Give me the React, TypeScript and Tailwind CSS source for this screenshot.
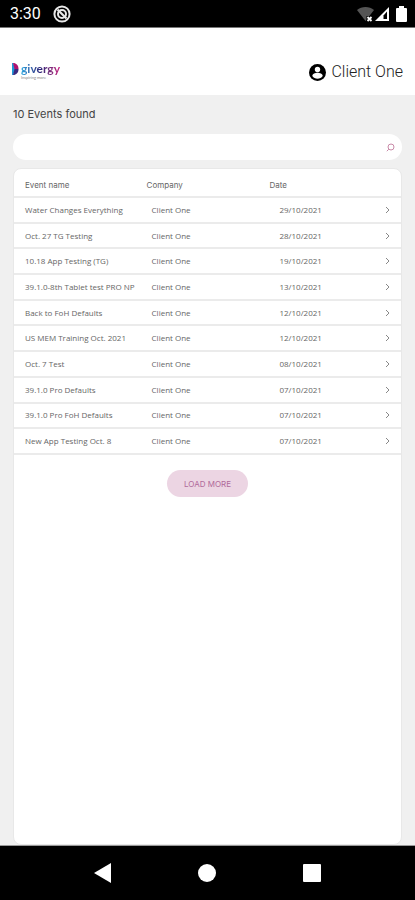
import React, { useState } from 'react';

interface EventRow {
  name: string;
  company: string;
  date: string;
}

const events: EventRow[] = [
  { name: 'Water Changes Everything', company: 'Client One', date: '29/10/2021' },
  { name: 'Oct. 27 TG Testing', company: 'Client One', date: '28/10/2021' },
  { name: '10.18 App Testing (TG)', company: 'Client One', date: '19/10/2021' },
  { name: '39.1.0-8th Tablet test PRO NP', company: 'Client One', date: '13/10/2021' },
  { name: 'Back to FoH Defaults', company: 'Client One', date: '12/10/2021' },
  { name: 'US MEM Training Oct. 2021', company: 'Client One', date: '12/10/2021' },
  { name: 'Oct. 7 Test', company: 'Client One', date: '08/10/2021' },
  { name: '39.1.0 Pro Defaults', company: 'Client One', date: '07/10/2021' },
  { name: '39.1.0 Pro FoH Defaults', company: 'Client One', date: '07/10/2021' },
  { name: 'New App Testing Oct. 8', company: 'Client One', date: '07/10/2021' },
];

const StatusBar: React.FC = () => (
  <div className="flex h-7 shrink-0 items-center justify-between border-b border-[#777777] bg-black pl-[10px] pr-2 text-white">
    <div className="flex items-center gap-3">
      <span className="font-['Roboto'] text-base leading-5">3:30</span>
      <svg width="18" height="18" viewBox="0 0 18 18" fill="none" stroke="#e8e8e8">
        <circle cx="9" cy="9" r="7.6" strokeWidth="2" />
        <circle cx="9" cy="9" r="4" strokeWidth="2" />
        <path d="M4.500 4.500l9 9" strokeWidth="2.200" />
      </svg>
    </div>
    <div className="flex items-center">
      <svg width="18" height="16" viewBox="0 0 18 16">
        <path d="M1 4C5.500 0 13.500 0 18 4L9.500 15z" fill="#555555" />
        <path d="M10.500 10h6v6h-6z" fill="#000000" />
        <path d="M11.500 11l4 4M15.500 11l-4 4" stroke="#ffffff" strokeWidth="1.800" />
      </svg>
      <svg width="15" height="16" viewBox="0 0 15 16" className="ml-px">
        <path d="M0 15L14 1v14z" fill="#ffffff" />
        <path d="M8.500 13V9.500L12 5.500v7.500z" fill="#000000" />
      </svg>
      <svg width="11" height="16" viewBox="0 0 11 16" className="ml-[6px]">
        <path d="M3 0h5v2h2q1 0 1 1v12q0 1-1 1H1q-1 0-1-1V3q0-1 1-1h2z" fill="#ffffff" />
      </svg>
    </div>
  </div>
);

const Logo: React.FC = () => (
  <a href="#" aria-label="givergy" className="flex items-start gap-[2px]">
    <svg width="7" height="12" viewBox="0 0 7 12">
      <path d="M0 0h1l3 6-3 6H0z" fill="#2196d6" />
      <path d="M1 0c3.500 0 5.500 2.500 5.500 6H2.500z" fill="#b0126f" />
      <path d="M1 12c3.500 0 5.500-2.500 5.500-6H2.500z" fill="#3a2a80" />
    </svg>
    <span className="flex flex-col">
      <span className="bg-gradient-to-r from-[#27a5e0] via-[#2c2377] to-[#c91b80] bg-clip-text font-['Lato'] text-xs font-bold leading-3 text-transparent">
        givergy
      </span>
      <span className="mt-px font-['Lato'] text-[4px] leading-1 text-[#888888]">Inspiring more</span>
    </span>
  </a>
);

const Header: React.FC = () => (
  <header className="flex h-[67px] shrink-0 items-end justify-between bg-white px-3 pb-[11px]">
    <div className="pb-1">
      <Logo />
    </div>
    <div className="flex items-center gap-[5px]">
      <svg width="17" height="17" viewBox="0 0 17 17">
        <circle cx="8.500" cy="8.500" r="8.500" fill="#000000" />
        <circle cx="8.500" cy="5.500" r="2.700" fill="#ffffff" />
        <path d="M3.300 12c0-2 3-3.200 5.200-3.200s5.200 1.200 5.200 3.200c-1.200 1.800-3 2.800-5.200 2.800S4.500 13.800 3.300 12z" fill="#ffffff" />
      </svg>
      <span className="font-['Roboto'] text-base font-light leading-6 text-[#222222]">Client One</span>
    </div>
  </header>
);

const SearchBox: React.FC = () => {
  const [query, setQuery] = useState('');

  return (
    <div className="mt-3 flex h-[26px] items-center rounded-full bg-white pl-3 pr-[7px]">
      <input
        type="text"
        aria-label="Search events"
        value={query}
        onChange={(e) => setQuery(e.target.value)}
        className="min-w-0 flex-1 bg-transparent text-xs outline-none"
      />
      <svg width="9" height="9" viewBox="0 0 9 9" fill="none" stroke="#c98aa8">
        <circle cx="5" cy="4" r="3" />
        <path d="M2.800 6.200L.8 8.200" />
      </svg>
    </div>
  );
};

const EventsTable: React.FC = () => (
  <table className="h-[286px] w-full table-fixed border-collapse text-left text-[8px] leading-2 text-[#666666]">
    <thead>
      <tr className="h-7 border-b-2 border-[#ebebeb]">
        <th className="w-[34%] pl-[11px] pt-1 font-normal">Event name</th>
        <th className="w-[32%] pl-px pt-1 font-normal">Company</th>
        <th className="pt-1 font-normal">Date</th>
        <th className="w-7" aria-label="Open" />
      </tr>
    </thead>
    <tbody className="font-['Open_Sans']">
      {events.map((event) => (
        <tr key={event.name} className="border-b-2 border-[#ebebeb]">
          <td className="whitespace-nowrap pl-[11px]">{event.name}</td>
          <td className="pl-[6px]">{event.company}</td>
          <td className="pl-[10px]">{event.date}</td>
          <td>
            <button type="button" aria-label={`Open ${event.name}`} className="block pl-3">
              <svg width="5" height="8" viewBox="0 0 5 8" fill="none" stroke="#888888">
                <path d="M1 1l3 3-3 3" />
              </svg>
            </button>
          </td>
        </tr>
      ))}
    </tbody>
  </table>
);

const NavBar: React.FC = () => (
  <nav className="flex h-[55px] shrink-0 items-center justify-center gap-[87px] border-t border-[#999999] bg-black">
    <button type="button" aria-label="Back">
      <svg width="17" height="20" viewBox="0 0 17 20" fill="#ffffff">
        <path d="M0 10L17 0v20z" />
      </svg>
    </button>
    <button type="button" aria-label="Home" className="h-[18px] w-[18px] rounded-full bg-white" />
    <button type="button" aria-label="Recent apps" className="h-[18px] w-[18px] rounded-[1px] bg-white" />
  </nav>
);

const App: React.FC = () => {
  return (
    <div className="flex min-h-screen flex-col bg-[#f0f0f0] font-['Inter',sans-serif]">
      <StatusBar />
      <Header />
      <main className="flex flex-1 flex-col px-[13px] pt-[11px]">
        <h1 className="text-[11px] leading-4 text-[#444444]">10 Events found</h1>
        <SearchBox />
        <section className="mt-2 flex flex-1 flex-col items-center rounded-lg border border-[#e8e8e8] bg-white">
          <EventsTable />
          <button
            type="button"
            className="mt-[15px] h-[27px] w-[81px] rounded-full bg-[#ecd5e3] text-[8px] text-[#b0699a]"
          >
            LOAD MORE
          </button>
        </section>
      </main>
      <NavBar />
    </div>
  );
};

export default App;
